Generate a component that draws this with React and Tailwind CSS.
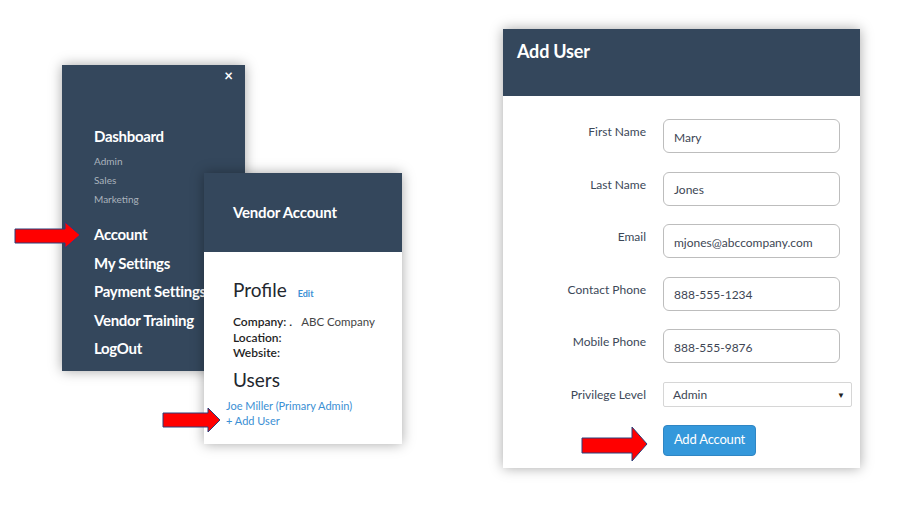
import React from "react";

function Arrow({ className, w, h, points }) {
  return (
    <svg className={className} width={w} height={h} viewBox={`0 0 ${w} ${h}`}>
      <polygon points={points} fill="#ff0000" stroke="#2a3f7a" strokeWidth="1" />
    </svg>
  );
}

function Field({ label, value }) {
  return (
    <div className="flex items-start">
      <div className="w-[143px] shrink-0 text-right text-[12px] leading-[16px] text-[#3c4858] pt-[5px]">{label}</div>
      <div className="ml-[17px] w-[177px] h-[34px] border-[1.5px] border-[#bdbdbd] rounded-[6px] flex items-center pl-[10px] pt-[3px] text-[12px] text-[#3d4654]">
        {value}
      </div>
    </div>
  );
}

export default function App() {
  return (
    <div className="relative w-[898px] h-[505px] bg-white overflow-hidden" style={{ fontFamily: "Lato, 'Open Sans', sans-serif" }}>
      {/* Sidebar menu */}
      <div className="absolute left-[62px] top-[65px] w-[183px] h-[306px] bg-[#34475c] shadow-[0_0_12px_rgba(0,0,0,0.35)] text-white">
        <div className="absolute right-[12px] top-[1px] text-[15px] font-bold leading-[18px]">×</div>
        <div className="pl-[32px] pt-[61px] flex flex-col">
          <div className="text-[15px] font-bold leading-[20px] tracking-[-0.3px]">Dashboard</div>
          <div className="mt-[6px] flex flex-col text-[10px] leading-[19px] text-[#aab3bd]">
            <div>Admin</div>
            <div>Sales</div>
            <div>Marketing</div>
          </div>
          <div className="mt-[11px] flex flex-col text-[15px] font-bold leading-[28.5px] whitespace-nowrap tracking-[-0.3px]">
            <div>Account</div>
            <div>My Settings</div>
            <div>Payment Settings</div>
            <div>Vendor Training</div>
            <div>LogOut</div>
          </div>
        </div>
      </div>

      {/* Vendor Account */}
      <div className="absolute left-[204px] top-[173px] w-[198px] h-[271px] bg-white shadow-[0_0_12px_rgba(0,0,0,0.35)]">
        <div className="h-[79px] bg-[#34475c] flex items-center pl-[29px] text-white text-[15px] font-bold tracking-[-0.2px]">Vendor Account</div>
        <div className="pl-[29px] pt-[26px]">
          <div className="flex items-baseline">
            <span className="text-[19px] leading-[24px] text-[#23272e]">Profile</span>
            <span className="ml-[11px] text-[9px] font-bold text-[#3b8fd4]">Edit</span>
          </div>
          <div className="mt-[12px] flex">
            <div className="flex flex-col text-[12px] leading-[15.5px] font-semibold text-[#1f1f1f]">
              <div>Company: .</div>
              <div>Location:</div>
              <div>Website:</div>
            </div>
            <div className="ml-[9px] text-[11.5px] leading-[15.5px] text-[#444]">ABC Company</div>
          </div>
          <div className="mt-[7px] text-[19px] leading-[24px] text-[#23272e]">Users</div>
        </div>
        <div className="pl-[22px] mt-[6px] flex flex-col text-[11px] leading-[15px] text-[#3b8fd4]">
          <div>Joe Miller (Primary Admin)</div>
          <div>+ Add User</div>
        </div>
      </div>

      {/* Add User */}
      <div className="absolute left-[503px] top-[29px] w-[357px] h-[439px] bg-white shadow-[0_0_12px_rgba(0,0,0,0.35)]">
        <div className="h-[67px] bg-[#34475c] pl-[14px] pt-[10px] text-white text-[18px] font-bold leading-[24px] tracking-[-0.2px]">Add User</div>
        <div className="pt-[23px] flex flex-col gap-[18.5px]">
          <Field label="First Name" value="Mary" />
          <Field label="Last Name" value="Jones" />
          <Field label="Email" value="mjones@abccompany.com" />
          <Field label="Contact Phone" value="888-555-1234" />
          <Field label="Mobile Phone" value="888-555-9876" />
          <div className="flex items-center">
            <div className="w-[143px] shrink-0 text-right text-[12px] leading-[16px] text-[#3c4858] pt-[2px]">Privilege Level</div>
            <div className="ml-[17px] w-[189px] h-[25px] border border-[#d6d6d6] rounded-[2px] flex items-center justify-between pl-[9px] pr-[6px] pt-[2px] text-[12px] text-[#3d4654]">
              <span>Admin</span>
              <span className="text-[8px] text-[#222]">▼</span>
            </div>
          </div>
        </div>
        <div className="pl-[160px] mt-[18px]">
          <div className="w-[93px] h-[31px] bg-[#3498db] border border-[#2f86c4] rounded-[4px] flex items-center justify-center text-white text-[13px] tracking-[-0.2px]">Add Account</div>
        </div>
      </div>

      <Arrow className="absolute left-[14px] top-[221px]" w={68} h={29} points="1,8 51,8 51,1 66,14 51,27 51,22 1,22" />
      <Arrow className="absolute left-[162px] top-[407px]" w={60} h={27} points="1,6 46,6 46,1 58,13 46,25 46,20 1,20" />
      <Arrow className="absolute left-[581px] top-[426px]" w={68} h={36} points="1,12 51,12 51,1 66,18 51,35 51,27 1,27" />
    </div>
  );
}
